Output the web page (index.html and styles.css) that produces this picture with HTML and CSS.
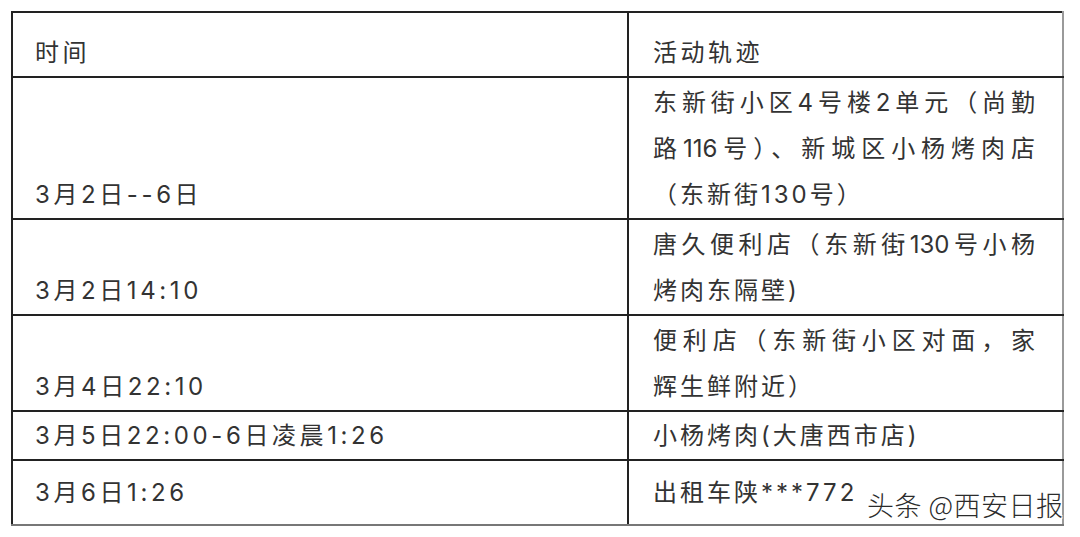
FILE: index.html
```html
<!DOCTYPE html>
<html lang="zh-CN">
<head>
<meta charset="utf-8">
<title>活动轨迹</title>
<link rel="stylesheet" href="styles.css">
</head>
<body>
<div class="page">
  <table class="trace">
    <colgroup><col class="c-time"><col class="c-place"></colgroup>
    <tr class="r-head">
      <td class="time head">时间</td>
      <td class="place head">活动轨迹</td>
    </tr>
    <tr class="r-1">
      <td class="time">3月2日--6日</td>
      <td class="place"><span class="ln just">东新街小区4号楼2单元（尚勤</span><span class="ln just">路116号）、新城区小杨烤肉店</span><span class="ln">（东新街130号）</span></td>
    </tr>
    <tr class="r-2">
      <td class="time">3月2日14:10</td>
      <td class="place"><span class="ln just">唐久便利店（东新街130号小杨</span><span class="ln">烤肉东隔壁)</span></td>
    </tr>
    <tr class="r-3">
      <td class="time">3月4日22:10</td>
      <td class="place"><span class="ln just">便利店（东新街小区对面，家</span><span class="ln">辉生鲜附近）</span></td>
    </tr>
    <tr class="r-4">
      <td class="time">3月5日22:00-6日凌晨1:26</td>
      <td class="place">小杨烤肉(大唐西市店)</td>
    </tr>
    <tr class="r-5">
      <td class="time">3月6日1:26</td>
      <td class="place">出租车陕***772</td>
    </tr>
  </table>
  <div class="mark">头条 @西安日报</div>
</div>
</body>
</html>
```
FILE: styles.css
```css
html, body {
  margin: 0;
  padding: 0;
  background: #ffffff;
}
.page {
  position: relative;
  width: 1080px;
  height: 537px;
  padding: 11px 0 0 11px;
  box-sizing: border-box;
  font-family: Inter, "Noto Sans CJK SC", sans-serif;
  color: #333333;
}
.trace {
  border-collapse: collapse;
  width: 1053px;
  table-layout: fixed;
}
.c-time { width: 616px; }
.trace td {
  border: 2px solid #222222;
  font-size: 24px;
  line-height: 46px;
  vertical-align: bottom;
  white-space: nowrap;
}
.trace td.time {
  padding: 0 20px 0 22px;
  letter-spacing: 3.6px;
}
.trace td.place {
  padding: 0 27px 0 24px;
  letter-spacing: 3px;
  border-right-color: #9a9a9a;
}
.trace td.head {
  letter-spacing: 3.5px;
}
.trace tr:last-child td {
  border-bottom-color: #777777;
}
.r-head { height: 65px; }
.r-1 { height: 142px; }
.r-2 { height: 96px; }
.r-3 { height: 96px; }
.r-4 { height: 49px; }
.r-5 { height: 65px; }
.r-5 td { vertical-align: middle; }
.ln { display: block; }
.just {
  text-align: justify;
  text-align-last: justify;
  text-justify: inter-character;
  letter-spacing: 0;
}
.mark {
  position: absolute;
  left: 867px;
  top: 488px;
  font-family: "Noto Sans CJK SC", sans-serif;
  font-size: 27px;
  line-height: 34px;
  letter-spacing: 0.5px;
  color: #2b2b2b;
  font-weight: 300;
  text-shadow: 1px 1px 0 #ffffff, -1px -1px 0 #ffffff, 1px -1px 0 #ffffff, -1px 1px 0 #ffffff;
  white-space: nowrap;
}
```
